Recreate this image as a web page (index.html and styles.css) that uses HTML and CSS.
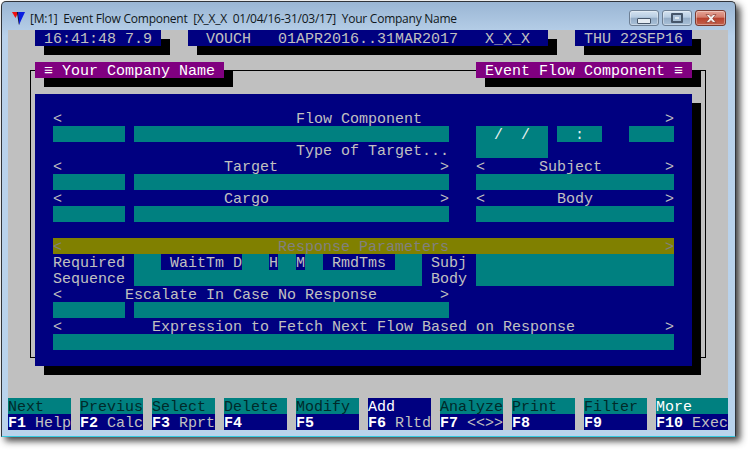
FILE: index.html
```html
<!DOCTYPE html>
<html lang="en">
<head>
<meta charset="utf-8">
<title>Event Flow Component</title>
<link rel="stylesheet" href="styles.css">
</head>
<body>
<div class="window">
  <header class="titlebar">
    <svg class="logo" width="13" height="13" viewBox="0 0 13 13"><path d="M0 0H6.500L3.500 6z" fill="#f01010"/><path d="M4.800 0H6.500L7.500 12.500 6.800 12.500z" fill="#101030"/><path d="M6.200 0H13L7.200 12.500z" fill="#0a1ee0"/></svg>
    <span class="title">[M:1]&nbsp; Event Flow Component&nbsp; [X_X_X&nbsp; 01/04/16-31/03/17]&nbsp; Your Company Name</span>
    <div class="controls">
      <span class="ctl"><i class="glyph-min"></i></span>
      <span class="ctl"><i class="glyph-max"></i></span>
      <span class="ctl close"><svg width="16" height="11" viewBox="0 0 16 11"><path d="M3 1.500h3l2 2 2-2h3L9.700 5.500 13 9.500h-3L8 7.500l-2 2H3l3.300-4z" fill="#f4f0ee" stroke="#7a2a20" stroke-width=".6"/></svg></span>
    </div>
  </header>
  <main class="console">
    <div class="stat stat-clock"> 16:41:48 7.9</div>
    <div class="stat stat-mode">  VOUCH   01APR2016..31MAR2017   X_X_X</div>
    <div class="stat stat-date"> THU 22SEP16</div>

    <div class="frame"></div>
    <div class="tab tab-left"> ≡ Your Company Name</div>
    <div class="tab tab-right"> Event Flow Component ≡</div>

    <section class="panel"></section>

    <div class="line l5">&lt;                          Flow Component                           &gt;</div>
    <div class="field f6a"></div>
    <div class="field f6b"></div>
    <div class="field f-date">  /  /</div>
    <div class="field f-time">  :</div>
    <div class="field f6e"></div>

    <div class="line l7">Type of Target...</div>
    <div class="line l8">&lt;                  Target                  &gt;   &lt;      Subject       &gt;</div>
    <div class="field f9a"></div>
    <div class="field f9b"></div>
    <div class="field f9c"></div>

    <div class="line l10">&lt;                  Cargo                   &gt;   &lt;        Body        &gt;</div>
    <div class="field f11a"></div>
    <div class="field f11b"></div>
    <div class="field f11c"></div>

    <div class="band">&lt;                        Response Parameters                        &gt;</div>

    <div class="line l14a">Required</div>
    <div class="line l15a">Sequence</div>
    <div class="field f-resp"></div>
    <div class="tag t-wait"> WaitTm D</div>
    <div class="tag t-h">H</div>
    <div class="tag t-m">M</div>
    <div class="tag t-rmd"> RmdTms</div>
    <div class="line l14b">Subj</div>
    <div class="line l15b">Body</div>
    <div class="field f-body"></div>

    <div class="line l16">&lt;       Escalate In Case No Response       &gt;</div>
    <div class="field f17a"></div>
    <div class="field f17b"></div>

    <div class="line l18">&lt;          Expression to Fetch Next Flow Based on Response          &gt;</div>
    <div class="field f19"></div>

    <nav class="fkeys">
      <div class="fkey"><span class="act">Next</span><span class="key"><b>F1</b> Help</span></div>
      <div class="fkey"><span class="act">Previus</span><span class="key"><b>F2</b> Calc</span></div>
      <div class="fkey"><span class="act">Select</span><span class="key"><b>F3</b> Rprt</span></div>
      <div class="fkey"><span class="act">Delete</span><span class="key"><b>F4</b></span></div>
      <div class="fkey"><span class="act">Modify</span><span class="key"><b>F5</b></span></div>
      <div class="fkey"><span class="act act-on">Add</span><span class="key"><b>F6</b> Rltd</span></div>
      <div class="fkey"><span class="act">Analyze</span><span class="key"><b>F7</b> &lt;&lt;&gt;&gt;</span></div>
      <div class="fkey"><span class="act">Print</span><span class="key"><b>F8</b></span></div>
      <div class="fkey"><span class="act">Filter</span><span class="key"><b>F9</b></span></div>
      <div class="fkey fkey-last"><span class="act act-more">More</span><span class="key"><b>F10</b> Exec</span></div>
    </nav>
  </main>
</div>
</body>
</html>
```
FILE: styles.css
```css
* { box-sizing: border-box; }
html, body { margin: 0; padding: 0; background: #fff; }
body { width: 748px; height: 450px; padding: 1px 0 0 1px; }

.window {
  width: 735px;
  height: 436px;
  padding: 0 7px 0 6px;
  border: 1px solid #30343a;
  border-bottom-color: #36c8e0;
  border-radius: 5px 5px 0 0;
  background: linear-gradient(#9ab6d4 0, #b9d1ea 34px, #b9d3ec 100%);
  box-shadow: 4px 4px 7px rgba(30, 30, 30, .85);
}

.titlebar {
  height: 28px;
  display: flex;
  align-items: center;
  position: relative;
}
.logo { margin: 5px 0 0 4px; flex: none; }
.title {
  margin: 6px 0 0 5px;
  font: 12px/16px "Open Sans", "Noto Sans", sans-serif;
  color: #101820;
  white-space: nowrap;
  letter-spacing: -.245px;
}
.controls { margin-left: auto; margin-right: 2px; margin-top: 4px; display: flex; gap: 3px; }
.ctl {
  width: 30px;
  height: 16px;
  display: flex;
  align-items: center;
  justify-content: center;
  border: 1px solid #6d7f94;
  border-radius: 3px;
  background: linear-gradient(#d4e2f0 0, #b8cde2 45%, #94acc6 50%, #a8c0d8 100%);
  box-shadow: inset 0 0 0 1px rgba(255, 255, 255, .35);
}
.ctl.close {
  width: 31px;
  border-color: #7a3a30;
  background: linear-gradient(#e6a496 0, #d27c6c 45%, #b8402c 50%, #c2604c 100%);
}
.glyph-min { width: 14px; height: 6px; margin-top: 5px; background: #e4ebf2; border: 1px solid #46566a; border-radius: 1px; }
.glyph-max { width: 12px; height: 10px; background: #dfe8f1; border: 2px solid #46566a; box-shadow: inset 0 0 0 2px #a9bfd6; border-radius: 1px; }

.console {
  width: 720px;
  height: 400px;
  display: grid;
  grid-template-columns: repeat(80, 9px);
  grid-template-rows: repeat(25, 16px);
  background: #c0c0c0;
  font: 15px/16px "Liberation Mono", "Courier New", monospace;
  color: #c0c0c0;
  white-space: pre;
}

/* every text cell sits 2px lower than the top of its 16px character row */
.stat, .tab, .line, .field, .band, .tag, .act, .key { padding-top: 2px; }

.stat { background: #000080; box-shadow: 9px 9px 0 #000; }
.stat-clock { grid-area: 1 / 4 / 2 / 18; }
.stat-mode { grid-area: 1 / 21 / 2 / 61; }
.stat-date { grid-area: 1 / 64 / 2 / 77; }

.frame {
  grid-area: 3 / 3 / 22 / 79;
  margin: 8px 4px 8px 4px;
  border: 1px solid #000;
}

.tab { background: #800080; color: #fff; box-shadow: 9px 9px 0 #000; }
.tab-left { grid-area: 3 / 4 / 4 / 25; }
.tab-right { grid-area: 3 / 53 / 4 / 77; }

.panel { grid-area: 5 / 4 / 22 / 77; background: #000080; box-shadow: 9px 9px 0 #000; }

.l5 { grid-area: 6 / 6 / 7 / 75; }
.l7 { grid-area: 8 / 33 / 9 / 50; }
.l8 { grid-area: 9 / 6 / 10 / 75; }
.l10 { grid-area: 11 / 6 / 12 / 75; }
.l14a { grid-area: 15 / 6 / 16 / 14; }
.l15a { grid-area: 16 / 6 / 17 / 14; }
.l14b { grid-area: 15 / 48 / 16 / 52; }
.l15b { grid-area: 16 / 48 / 17 / 52; }
.l16 { grid-area: 17 / 6 / 18 / 50; }
.l18 { grid-area: 19 / 6 / 20 / 75; }

.field { background: #008080; color: #e8f0f0; }
.f6a { grid-area: 7 / 6 / 8 / 14; }
.f6b { grid-area: 7 / 15 / 8 / 50; }
.f-date { grid-area: 7 / 53 / 9 / 61; }
.f-time { grid-area: 7 / 62 / 8 / 67; }
.f6e { grid-area: 7 / 70 / 8 / 75; }
.f9a { grid-area: 10 / 6 / 11 / 14; }
.f9b { grid-area: 10 / 15 / 11 / 50; }
.f9c { grid-area: 10 / 53 / 11 / 75; }
.f11a { grid-area: 12 / 6 / 13 / 14; }
.f11b { grid-area: 12 / 15 / 13 / 50; }
.f11c { grid-area: 12 / 53 / 13 / 75; }
.f-resp { grid-area: 15 / 15 / 17 / 47; }
.f-body { grid-area: 15 / 53 / 17 / 75; }
.f17a { grid-area: 18 / 6 / 19 / 14; }
.f17b { grid-area: 18 / 15 / 19 / 50; }
.f19 { grid-area: 20 / 6 / 21 / 75; }

.band { grid-area: 14 / 6 / 15 / 75; background: #808000; color: #808080; }

.tag { background: #000080; }
.t-wait { grid-area: 15 / 18 / 16 / 27; }
.t-h { grid-area: 15 / 30 / 16 / 31; }
.t-m { grid-area: 15 / 33 / 16 / 34; }
.t-rmd { grid-area: 15 / 36 / 16 / 44; }

.fkeys { grid-area: 24 / 1 / 26 / 81; display: flex; gap: 9px; }
.fkey { width: 63px; display: flex; flex-direction: column; }
.fkey-last { width: 72px; }
.act { height: 16px; background: #008080; color: #002a2a; }
.act-on { background: #000080; color: #fff; }
.act-more { color: #fff; }
.key { height: 16px; background: #000080; color: #c0c0c0; }
.key b { color: #fff; font-weight: 700; }
```
